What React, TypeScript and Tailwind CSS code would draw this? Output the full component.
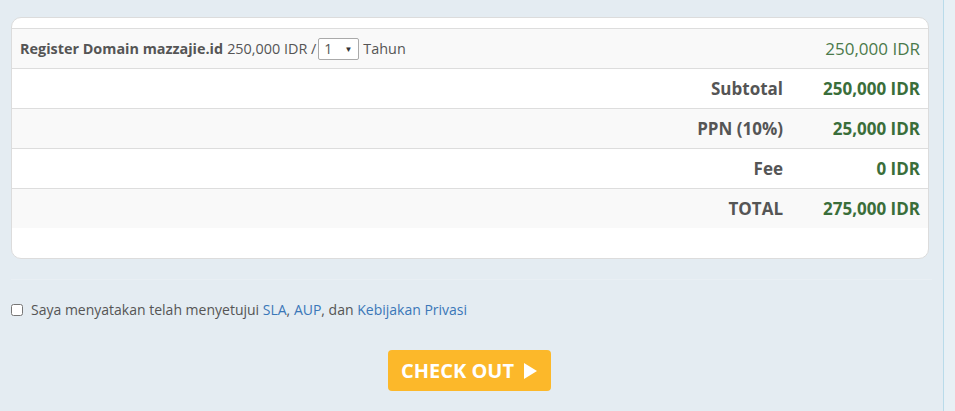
import React from "react";

const rows = [
  { label: "Subtotal", value: "250,000 IDR" },
  { label: "PPN (10%)", value: "25,000 IDR" },
  { label: "Fee", value: "0 IDR" },
  { label: "TOTAL", value: "275,000 IDR" },
];

export default function App() {
  return (
    <div
      className="flex w-[955px] h-[411px] overflow-hidden bg-[#e8f0f5] text-[#555]"
      style={{ fontFamily: '"Open Sans", "Liberation Sans", sans-serif' }}
    >
      <div className="w-[944px] shrink-0 bg-[#e4ecf2] border-r border-[#b9dbea] px-[11px]">
        {/* Cart summary */}
        <div className="mt-[17px] w-[918px] rounded-[10px] border border-[#dcdcdc] bg-white pt-[10px] pb-[30px] overflow-hidden">
          <div className="flex items-center h-[40px] border-t border-[#dddddd] bg-[#f9f9f9]">
            <div className="flex-1 flex items-center pl-[8px] text-[14.4px]">
              <span className="font-bold">Register Domain mazzajie.id</span>
              <span className="ml-[4px]">250,000 IDR /</span>
              <div className="ml-[2px] flex items-center justify-between w-[41px] h-[22px] border border-[#aaaaaa] rounded-[2px] bg-white pl-[5px] pr-[6px]">
                <span className="text-[14px] leading-none">1</span>
                <span className="text-[8px] leading-none text-[#333]">▼</span>
              </div>
              <span className="ml-[4px]">Tahun</span>
            </div>
            <div className="w-[137px] pr-[8px] text-right text-[17px] text-[#4b7a4b]">250,000 IDR</div>
          </div>
          {rows.map((r, i) => (
            <div
              key={r.label}
              className={`flex items-center h-[40px] ${i === 0 || i === 2 ? "bg-white" : "bg-[#f9f9f9]"} border-t border-[#dddddd]`}
            >
              <div className="flex-1 pr-[8px] text-right text-[17px] font-bold text-[#555]">{r.label}</div>
              <div className="w-[137px] pr-[8px] text-right text-[17px] font-bold text-[#3a6e3a]">{r.value}</div>
            </div>
          ))}
        </div>

        <div className="mt-[20px] border-t border-[#e9eff4]" />

        <label className="mt-[19px] flex items-center text-[14px] text-[#555]">
          <input type="checkbox" className="w-[12px] h-[12px] m-0 mr-[8px] accent-[#dddddd]" />
          <span>
            Saya menyatakan telah menyetujui <a className="text-[#3a77b8]">SLA</a>,{" "}
            <a className="text-[#3a77b8]">AUP</a>, dan{" "}
            <a className="text-[#3a77b8]">Kebijakan Privasi</a>
          </span>
        </label>

        <div className="mt-[30px] w-[916px] flex justify-center">
          <button className="flex items-center gap-[9px] h-[41px] w-[163px] justify-center rounded-[4px] bg-[#fcb82a] text-white text-[20px] font-bold">
            <span>CHECK OUT</span>
            <svg width="14" height="16" viewBox="0 0 14 16">
              <path d="M1 0 L14 8 L1 16 Z" fill="#fff" />
            </svg>
          </button>
        </div>
      </div>
      <div className="flex-1" />
    </div>
  );
}
